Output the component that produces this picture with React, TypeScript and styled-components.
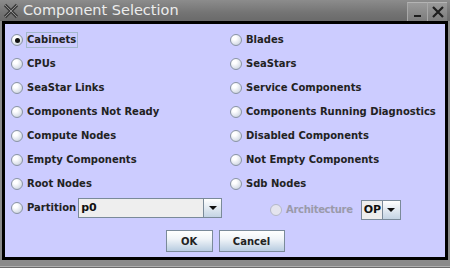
import styled, { createGlobalStyle } from "styled-components";
import React, { useState } from "react";

const GlobalStyle = createGlobalStyle`
  html, body {
    margin: 0;
    padding: 0;
    background: #8a8a8a;
  }
`;

const Window = styled.div`
  width: 450px;
  height: 268px;
  display: flex;
  flex-direction: column;
  background: #8a8a8a;
  box-sizing: border-box;
  border-bottom: 1px solid #6a6a6a;
`;

const TitleBar = styled.div`
  height: 21px;
  display: flex;
  align-items: center;
  background: linear-gradient(#8c8c8c, #747474 60%, #6a6a6a);
  font-family: "DejaVu Sans", sans-serif;
  font-size: 14.5px;
  color: #ececec;
`;

const TitleIcon = styled.svg`
  width: 16px;
  height: 16px;
  margin: 0 4px 0 3px;
`;

const TitleText = styled.span`
  flex: 1;
  line-height: 21px;
`;

const TitleButton = styled.div`
  width: 20px;
  height: 19px;
  margin-top: 2px;
  box-sizing: border-box;
  border-left: 1px solid #a8a8a8;
  border-top: 1px solid #b4b4b4;
  background: linear-gradient(#9a9a9a, #7c7c7c);
  display: flex;
  align-items: center;
  justify-content: center;
  &:last-child {
    margin-right: 3px;
  }
`;

const Body = styled.div`
  flex: 1;
  padding: 0 2px 6px 2px;
  display: flex;
  border-bottom: 1px solid #b0b0b0;
`;

const Panel = styled.div`
  flex: 1;
  border: 3px solid #000;
  background: #ccccff;
  padding: 4px 0 0 6px;
  font-family: "DejaVu Sans", sans-serif;
  font-weight: bold;
  font-size: 10px;
  color: #222;
`;

const Grid = styled.div`
  display: grid;
  grid-template-columns: 219px 200px;
  grid-auto-rows: 24px;
`;

const Option = styled.label<{ $indent?: number; $drop?: number }>`
  display: flex;
  align-items: center;
  padding-left: ${(p) => p.$indent || 0}px;
  margin-top: ${(p) => p.$drop || 0}px;
  cursor: default;
`;

const Radio = styled.span<{ $on?: boolean; $disabled?: boolean }>`
  width: 12px;
  height: 12px;
  box-sizing: border-box;
  border-radius: 50%;
  border: 1px solid ${(p) => (p.$disabled ? "#b4b8c8" : "#8a94a4")};
  background: ${(p) =>
    p.$disabled
      ? "#e4e4ee"
      : "radial-gradient(circle at 35% 30%, #ffffff 20%, #dfe4ec 60%, #b9c3d0)"};
  display: flex;
  align-items: center;
  justify-content: center;
  margin-right: 3px;
  flex-shrink: 0;
  &::after {
    content: "";
    display: ${(p) => (p.$on ? "block" : "none")};
    width: 5px;
    height: 5px;
    border-radius: 50%;
    background: #111;
  }
`;

const Text = styled.span<{ $focus?: boolean; $disabled?: boolean }>`
  border: 1px solid ${(p) => (p.$focus ? "#a3b8cc" : "transparent")};
  padding: 1px 1px 1px 0;
  line-height: 12px;
  white-space: nowrap;
  letter-spacing: ${(p) => (p.$disabled ? "-0.3px" : "0")};
  color: ${(p) => (p.$disabled ? "#9a9aaa" : "#222")};
`;

const Combo = styled.div<{ $width: number; $gap: number }>`
  width: ${(p) => p.$width}px;
  height: 20px;
  box-sizing: border-box;
  border: 1px solid #7a8a99;
  display: flex;
  background: #eeeeee;
  margin-left: ${(p) => p.$gap}px;
`;

const ComboValue = styled.div`
  flex: 1;
  padding-left: 2px;
  line-height: 18px;
  font-size: 11px;
  color: #111;
`;

const ComboArrow = styled.div`
  width: 17px;
  border-left: 1px solid #7a8a99;
  background: linear-gradient(#ffffff, #c4d4e4);
  display: flex;
  align-items: center;
  justify-content: center;
  &::after {
    content: "";
    border-left: 4px solid transparent;
    border-right: 4px solid transparent;
    border-top: 4px solid #111;
  }
`;

const Buttons = styled.div`
  display: flex;
  justify-content: center;
  gap: 6px;
  margin: 10px 6px 0 0;
`;

const Button = styled.button<{ $width: number }>`
  width: ${(p) => p.$width}px;
  height: 22px;
  border: 1px solid #7a8a99;
  background: linear-gradient(#ffffff, #f0f4f8 40%, #b8cce0);
  font-family: "DejaVu Sans", sans-serif;
  font-weight: bold;
  font-size: 10px;
  color: #222;
  padding: 0;
`;

const options = [
  ["Cabinets", "Blades"],
  ["CPUs", "SeaStars"],
  ["SeaStar Links", "Service Components"],
  ["Components Not Ready", "Components Running Diagnostics"],
  ["Compute Nodes", "Disabled Components"],
  ["Empty Components", "Not Empty Components"],
  ["Root Nodes", "Sdb Nodes"],
];

const App = () => {
  const [selected, setSelected] = useState("Cabinets");

  const renderOption = (name: string) => (
    <Option key={name} onClick={() => setSelected(name)}>
      <Radio $on={selected === name} />
      <Text $focus={selected === name}>{name}</Text>
    </Option>
  );

  return (
    <>
      <GlobalStyle />
      <Window>
        <TitleBar>
          <TitleIcon viewBox="0 0 16 16">
            <path d="M2 2 L14 14 M14 2 L2 14" stroke="#3c3c3c" strokeWidth="3.2" />
            <path d="M2 2 L14 14 M14 2 L2 14" stroke="#8e8e8e" strokeWidth="1" />
          </TitleIcon>
          <TitleText>Component Selection</TitleText>
          <TitleButton>
            <svg width="11" height="11" viewBox="0 0 11 11">
              <rect x="2" y="8" width="7" height="2" fill="#1e1e1e" />
            </svg>
          </TitleButton>
          <TitleButton>
            <svg width="14" height="14" viewBox="0 0 14 14">
              <path d="M2 2 L12 12 M12 2 L2 12" stroke="#1e1e1e" strokeWidth="2.2" />
            </svg>
          </TitleButton>
        </TitleBar>
        <Body>
          <Panel>
            <Grid>
              {options.map(([a, b]) => (
                <React.Fragment key={a}>
                  {renderOption(a)}
                  {renderOption(b)}
                </React.Fragment>
              ))}
              <Option onClick={() => setSelected("Partition")}>
                <Radio $on={selected === "Partition"} />
                <Text $focus={selected === "Partition"}>Partition</Text>
                <Combo $width={144} $gap={0}>
                  <ComboValue>p0</ComboValue>
                  <ComboArrow />
                </Combo>
              </Option>
              <Option $indent={40} $drop={4}>
                <Radio $disabled />
                <Text $disabled>Architecture</Text>
                <Combo $width={40} $gap={6}>
                  <ComboValue>OP</ComboValue>
                  <ComboArrow />
                </Combo>
              </Option>
            </Grid>
            <Buttons>
              <Button $width={47}>OK</Button>
              <Button $width={66}>Cancel</Button>
            </Buttons>
          </Panel>
        </Body>
      </Window>
    </>
  );
};

export default App;
